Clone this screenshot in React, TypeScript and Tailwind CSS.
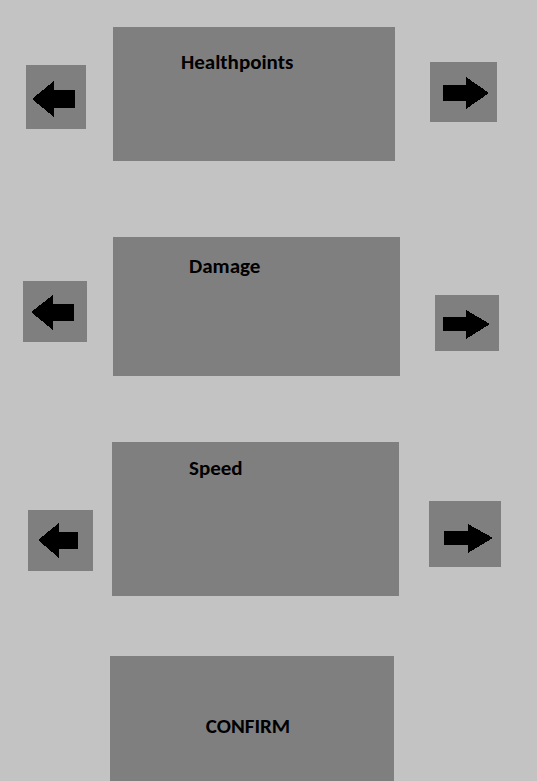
type ArrowProps = { label: string; className: string; viewBox: string; points: string };

function ArrowButton({ label, className, viewBox, points }: ArrowProps) {
  return (
    <button type="button" aria-label={label} className={`shrink-0 bg-[#7f7f7f] ${className}`}>
      <svg viewBox={viewBox} className="block h-full w-full" shapeRendering="crispEdges" aria-hidden="true">
        <polygon points={points} fill="#000" />
      </svg>
    </button>
  );
}

type RowProps = {
  title: string;
  rowClass: string;
  panelClass: string;
  previous: Omit<ArrowProps, "label">;
  next: Omit<ArrowProps, "label">;
};

const rows: RowProps[] = [
  {
    title: "Healthpoints",
    rowClass: "pt-[27px] pl-[26px] pr-10",
    panelClass: "h-[134px] ml-[27px] mr-[35px] pl-[68px] pt-[23px]",
    previous: {
      className: "mt-[38px] h-16 w-[60px]",
      viewBox: "0 0 60 64",
      points: "6,34 28,16 28,25 49,25 49,43 28,43 28,52",
    },
    next: {
      className: "mt-[35px] h-[60px] w-[67px]",
      viewBox: "0 0 67 60",
      points: "13,23 36,23 36,15 59,31 36,47 36,39 13,39",
    },
  },
  {
    title: "Damage",
    rowClass: "pt-[76px] pl-[23px] pr-[38px]",
    panelClass: "h-[139px] ml-[26px] mr-[35px] pl-[76px] pt-[17px]",
    previous: {
      className: "mt-11 h-[61px] w-16",
      viewBox: "0 0 64 61",
      points: "8,31 30,14 30,23 51,23 51,40 30,40 30,49",
    },
    next: {
      className: "mt-[58px] h-14 w-16",
      viewBox: "0 0 64 56",
      points: "8,22 31,22 31,15 55,29 31,44 31,36 8,36",
    },
  },
  {
    title: "Speed",
    rowClass: "pt-[66px] pl-7 pr-9",
    panelClass: "h-[154px] ml-[19px] mr-[30px] pl-[77px] pt-[14px]",
    previous: {
      className: "mt-[68px] h-[61px] w-[65px]",
      viewBox: "0 0 65 61",
      points: "10,30 31,13 31,22 50,22 50,39 31,39 31,48",
    },
    next: {
      className: "mt-[59px] h-[66px] w-[72px]",
      viewBox: "0 0 72 66",
      points: "15,30 39,30 39,23 64,37 39,52 39,44 15,44",
    },
  },
];

function StatRow({ title, rowClass, panelClass, previous, next }: RowProps) {
  return (
    <section className={`flex items-start ${rowClass}`}>
      <ArrowButton label={`Previous ${title}`} {...previous} />
      <div className={`min-w-0 flex-1 bg-[#7f7f7f] ${panelClass}`}>
        <h2>{title}</h2>
      </div>
      <ArrowButton label={`Next ${title}`} {...next} />
    </section>
  );
}

export default function App() {
  return (
    <main className="flex min-h-screen flex-col bg-[#c3c3c3] font-['Carlito','Lato',sans-serif] text-[21px] leading-6 font-bold text-black">
      {rows.map((row) => (
        <StatRow key={row.title} {...row} />
      ))}
      <div className="flex flex-1 pt-[60px] pr-[143px] pl-[110px]">
        <button type="button" className="flex min-h-[125px] flex-1 items-start justify-center bg-[#7f7f7f] pt-[58px] pr-2">
          CONFIRM
        </button>
      </div>
    </main>
  );
}
